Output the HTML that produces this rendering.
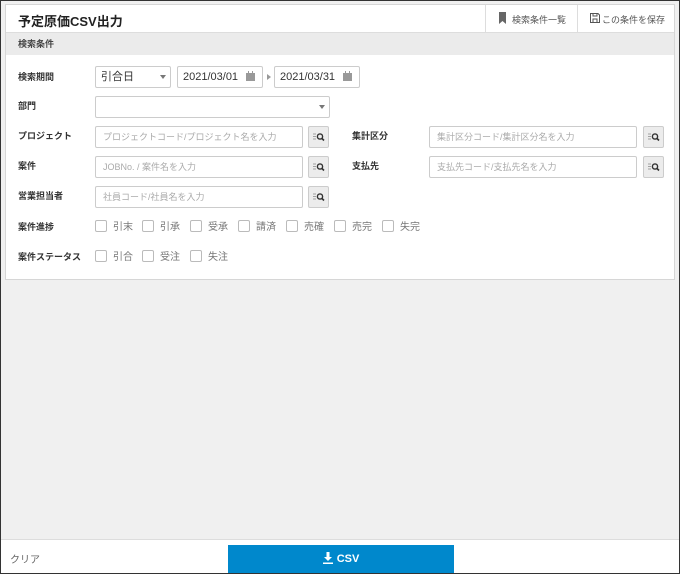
<!DOCTYPE html>
<html><head><meta charset="utf-8"><style>
*{box-sizing:border-box;margin:0;padding:0}
body{width:680px;height:574px;font-family:"Liberation Sans","Noto Sans CJK JP",sans-serif;background:#f0f0f0;position:relative;overflow:hidden;color:#333}
.frame{position:absolute;left:0;top:0;width:680px;height:574px;border:1px solid #333;}
.abs{position:absolute}
.panel{position:absolute;left:5px;top:4px;width:670px;height:276px;background:#fff;border:1px solid #d6d6d6}
.hdr{position:absolute;left:0;top:0;width:668px;height:28px;border-bottom:1px solid #ddd}
.sec{position:absolute;left:0;top:28px;width:668px;height:22px;background:#ebebeb;font-size:9px;font-weight:bold;line-height:22px;padding:0 12px;color:#444}
.lbl{position:absolute;font-size:9px;font-weight:bold;color:#333;line-height:12px}
.inp{position:absolute;height:22px;border:1px solid #ccc;border-radius:2px;background:#fff;font-size:9px;color:#aaa;line-height:20px;padding:0 7px;white-space:nowrap}
.val{color:#333;font-size:11px;padding:0 5px}
.btn{position:absolute;width:21px;height:22px;border:1px solid #ccc;border-radius:2px;background:#ececec}
.cb{position:absolute;font-size:10px;color:#777;line-height:13px}
.cb i{display:inline-block;width:12px;height:12px;border:1px solid #bbb;border-radius:2px;vertical-align:-2px;margin-right:6px}
.caret{position:absolute;width:0;height:0;border-left:3px solid transparent;border-right:3px solid transparent;border-top:4px solid #777}
</style></head><body>
<div class="panel">
 <div class="hdr">
  <div class="abs" style="left:12px;top:6px;font-size:13px;font-weight:bold;color:#222">予定原価CSV出力</div>
  <div class="abs" style="left:479px;top:0;width:1px;height:28px;background:#ddd"></div>
  <div class="abs" style="left:571px;top:0;width:1px;height:28px;background:#ddd"></div>
  <svg class="abs" style="left:492px;top:7px" width="9" height="12"><path d="M1 0H8V12L4.5 9L1 12Z" fill="#666"/></svg>
  <div class="abs" style="left:506px;top:8px;font-size:9px;color:#555">検索条件一覧</div>
  <svg class="abs" style="left:584px;top:8px" width="10" height="10"><path d="M0.5 0.5H8L9.5 2V9.5H0.5Z M3 0.5V3H7V0.5 M3 9.5V6H7V9.5" fill="none" stroke="#555" stroke-width="1"/></svg>
  <div class="abs" style="left:596px;top:8px;font-size:9px;color:#555">この条件を保存</div>
 </div>
 <div class="sec">検索条件</div>
</div>
<div class="lbl" style="left:18px;top:71px">検索期間</div>
<div class="inp val" style="left:95px;top:66px;width:76px">引合日</div><div class="caret" style="left:160px;top:75px"></div>
<div class="inp val" style="left:177px;top:66px;width:86px">2021/03/01</div>
<svg class="abs" style="left:246px;top:71px" width="9" height="10"><rect x="0" y="2" width="9" height="8" fill="#999"/><rect x="2" y="0" width="1" height="3" fill="#999"/><rect x="6" y="0" width="1" height="3" fill="#999"/></svg>
<div class="abs" style="left:267px;top:74px;width:0;height:0;border-top:3px solid transparent;border-bottom:3px solid transparent;border-left:4px solid #999"></div>
<div class="inp val" style="left:274px;top:66px;width:86px">2021/03/31</div>
<svg class="abs" style="left:343px;top:71px" width="9" height="10"><rect x="0" y="2" width="9" height="8" fill="#999"/><rect x="2" y="0" width="1" height="3" fill="#999"/><rect x="6" y="0" width="1" height="3" fill="#999"/></svg>

<div class="lbl" style="left:18px;top:100px">部門</div>
<div class="inp" style="left:95px;top:96px;width:235px"></div><div class="caret" style="left:319px;top:105px"></div>

<div class="lbl" style="left:18px;top:130px">プロジェクト</div>
<div class="inp" style="left:95px;top:126px;width:208px">プロジェクトコード/プロジェクト名を入力</div>
<div class="btn" style="left:308px;top:126px"></div>
<div class="lbl" style="left:352px;top:130px">集計区分</div>
<div class="inp" style="left:429px;top:126px;width:208px">集計区分コード/集計区分名を入力</div>
<div class="btn" style="left:643px;top:126px"></div>

<div class="lbl" style="left:18px;top:160px">案件</div>
<div class="inp" style="left:95px;top:156px;width:208px">JOBNo. / 案件名を入力</div>
<div class="btn" style="left:308px;top:156px"></div>
<div class="lbl" style="left:352px;top:160px">支払先</div>
<div class="inp" style="left:429px;top:156px;width:208px">支払先コード/支払先名を入力</div>
<div class="btn" style="left:643px;top:156px"></div>

<div class="lbl" style="left:18px;top:190px">営業担当者</div>
<div class="inp" style="left:95px;top:186px;width:208px">社員コード/社員名を入力</div>
<div class="btn" style="left:308px;top:186px"></div>

<div class="lbl" style="left:18px;top:221px">案件進捗</div>
<div class="cb" style="left:95px;top:220px"><i></i>引末</div>
<div class="cb" style="left:142px;top:220px"><i></i>引承</div>
<div class="cb" style="left:190px;top:220px"><i></i>受承</div>
<div class="cb" style="left:238px;top:220px"><i></i>請済</div>
<div class="cb" style="left:286px;top:220px"><i></i>売確</div>
<div class="cb" style="left:334px;top:220px"><i></i>売完</div>
<div class="cb" style="left:382px;top:220px"><i></i>失完</div>

<div class="lbl" style="left:18px;top:251px">案件ステータス</div>
<div class="cb" style="left:95px;top:250px"><i></i>引合</div>
<div class="cb" style="left:142px;top:250px"><i></i>受注</div>
<div class="cb" style="left:190px;top:250px"><i></i>失注</div>

<div class="abs" style="left:0;top:539px;width:680px;height:35px;background:#fff;border-top:1px solid #ddd"></div>
<div class="abs" style="left:10px;top:551px;font-size:10px;color:#666">クリア</div>
<div class="abs" style="left:228px;top:545px;width:226px;height:28px;background:#0088cc;color:#fff;font-size:11px;font-weight:bold;text-align:center;padding-top:7px">
 <svg width="10" height="12" style="vertical-align:-2px;margin-right:4px"><path d="M3.5 0H6.5V5H9L5 9L1 5H3.5Z" fill="#fff"/><rect x="0" y="10.5" width="10" height="1.5" fill="#fff"/></svg>CSV</div>
<div class="frame"></div>
<svg width="0" height="0" style="position:absolute"><defs><g id="s"><path d="M0 1H3M0 3.5H3M0 6H3" stroke="#888" stroke-width="0.8"/><circle cx="7" cy="3.5" r="2.6" fill="none" stroke="#333" stroke-width="1.4"/><path d="M9 5.5L11 7.5" stroke="#333" stroke-width="1.6"/></g></defs></svg>
<svg class="abs" style="left:313px;top:133px" width="12" height="9"><use href="#s"/></svg>
<svg class="abs" style="left:648px;top:133px" width="12" height="9"><use href="#s"/></svg>
<svg class="abs" style="left:313px;top:163px" width="12" height="9"><use href="#s"/></svg>
<svg class="abs" style="left:648px;top:163px" width="12" height="9"><use href="#s"/></svg>
<svg class="abs" style="left:313px;top:193px" width="12" height="9"><use href="#s"/></svg>
</body></html>
